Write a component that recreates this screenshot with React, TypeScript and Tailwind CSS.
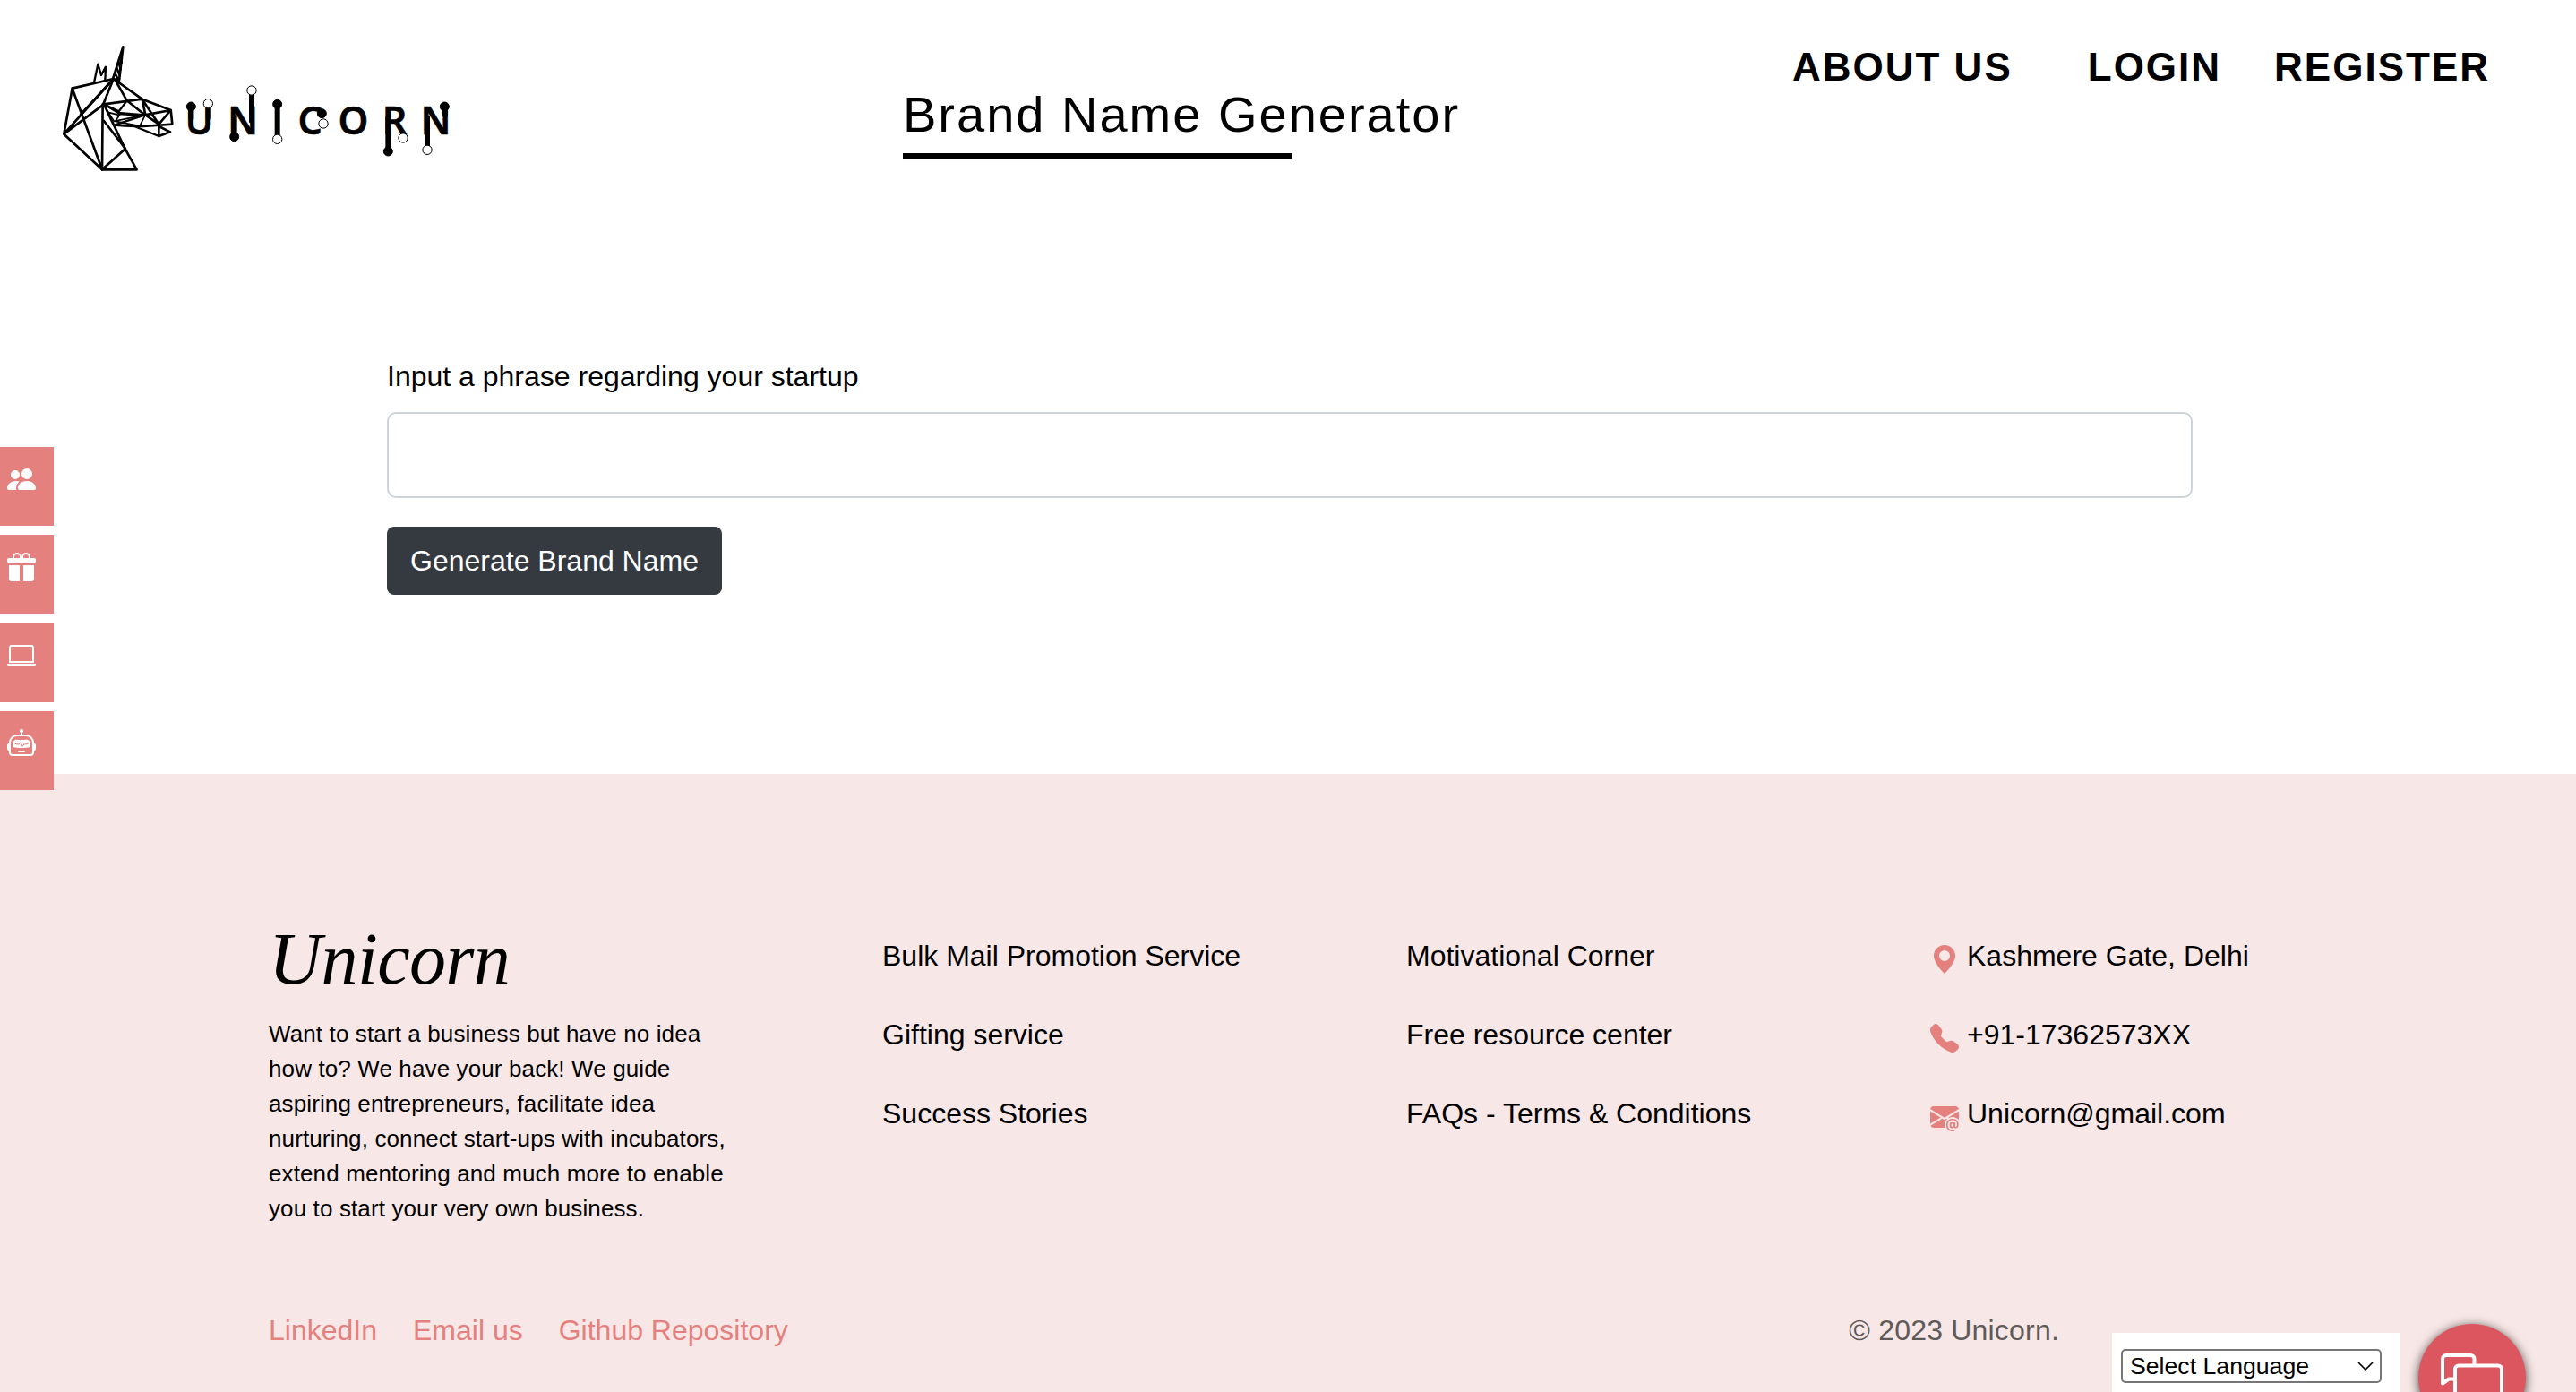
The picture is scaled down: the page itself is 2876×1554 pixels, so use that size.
import type { IconType } from "react-icons";
import {
  BsEnvelopeAtFill,
  BsGeoAltFill,
  BsGiftFill,
  BsLaptop,
  BsPeopleFill,
  BsRobot,
  BsTelephoneFill,
} from "react-icons/bs";

function UnicornHead() {
  return (
    <g fill="none" stroke="#000" strokeWidth="8" strokeLinejoin="round" strokeLinecap="round">
      {/* mane and neck */}
      <path d="M230 174L92 206L64 359L192 478H308L268 407L198 259L64 359L230 174" />
      <path d="M92 206L192 478L194 259" />
      <path d="M230 174L196 259M120 294L226 178M192 478L270 408L198 315" />
      {/* muzzle */}
      <path d="M198 259L326 242M230 174L326 242L422 279L427 326L330 333L235 329" />
      <path d="M236 178L275 247L335 295L422 279L382 326L326 242L337 295L382 326L382 366L420 352L388 336" />
      <path d="M235 329L300 333L382 366M275 247L248 283L198 259L246 288L335 295L235 328" strokeWidth="7" />
      <path d="M248 292L335 298L318 332M212 286L250 296L236 316L318 332M204 272L232 316L330 296" strokeWidth="5" />
      {/* horn */}
      <path d="M228 174L262 67L249 180Z" />
      <path d="M254 100L257 122M248 118L254 142M241 138L250 160M235 156L246 176" />
      {/* crown */}
      <path d="M165 187L178 125L189 162L204 134L202 180" strokeWidth="7" />
    </g>
  );
}

function Logo() {
  const letters: [string, number][] = [
    ["U", 518],
    ["N", 663],
    ["C", 889],
    ["O", 1033],
    ["R", 1172],
    ["N", 1310],
  ];
  return (
    <svg viewBox="0 0 1440 540" className="mt-[30px] ml-[50px] h-[180px] w-[480px] shrink-0" aria-label="Unicorn">
      <UnicornHead />
      <g
        className="font-['Noto_Sans','Open_Sans',sans-serif] font-semibold"
        fontSize="129"
        textAnchor="middle"
        stroke="#000"
        strokeWidth="1.5"
      >
        {letters.map(([char, x]) => (
          <text key={x} x={x} y="360">
            {char}
          </text>
        ))}
        <text x="779" y="358" fontSize="120" className="font-['Liberation_Sans',sans-serif] font-normal">
          I
        </text>
      </g>
      <g stroke="#000" strokeWidth="18">
        <path d="M490 268V310M548 268V310M635 300V366M693 215V320M779 260V374M1150 300V416M1281 300V410M1341 268V300" />
      </g>
      <g stroke="#000" strokeWidth="3" fill="#000">
        <circle cx="490" cy="267" r="15" />
        <circle cx="635" cy="368" r="15" />
        <circle cx="779" cy="259" r="15" />
        <circle cx="928" cy="290" r="15" />
        <circle cx="1150" cy="417" r="15" />
        <circle cx="1339" cy="267" r="15" />
      </g>
      <g stroke="#000" strokeWidth="3" fill="#fff">
        <circle cx="547" cy="257" r="15.5" />
        <circle cx="693" cy="213" r="15.5" />
        <circle cx="779" cy="376" r="15.5" />
        <circle cx="933" cy="324" r="15.5" />
        <circle cx="1200" cy="372" r="15.5" />
        <circle cx="1281" cy="412" r="15.5" />
      </g>
    </svg>
  );
}

function Header() {
  return (
    <header className="flex h-[210px] items-start">
      <Logo />
      <div className="mt-[96px] ml-[478px]">
        <h1 className="text-[56px] leading-[64px] tracking-[2px] whitespace-nowrap">Brand Name Generator</h1>
        <div className="mt-[11px] h-[6px] w-[435px] bg-black" />
      </div>
      <nav className="mt-[49px] mr-[96px] ml-auto flex text-[44px] leading-[52px] font-bold tracking-[2px] whitespace-nowrap">
        <a className="mr-[84px]">ABOUT US</a>
        <a className="mr-[59px]">LOGIN</a>
        <a>REGISTER</a>
      </nav>
    </header>
  );
}

function SideTabs() {
  const tabs: IconType[] = [BsPeopleFill, BsGiftFill, BsLaptop, BsRobot];
  return (
    <aside className="absolute top-[499px] left-0 flex h-[383px] flex-col justify-between">
      {tabs.map((Icon, i) => (
        <a key={i} className="h-[88px] w-[60px] bg-[#e4807d] pt-[20px] pl-[8px] text-white">
          <Icon className="size-8" />
        </a>
      ))}
    </aside>
  );
}

function GeneratorForm() {
  return (
    <main className="flex h-[654px] flex-col items-start px-[432px] pt-[186px] pr-[428px]">
      <label className="h-[64px] text-[32px] leading-[48px] whitespace-nowrap">
        Input a phrase regarding your startup
      </label>
      <input className="h-[96px] w-full rounded-[10px] border-2 border-[#ced4da] bg-white px-6 outline-none" />
      <button className="mt-[32px] h-[76px] w-[374px] rounded-lg bg-[#343a40] text-[32px] leading-[74px] whitespace-nowrap text-white">
        Generate Brand Name
      </button>
    </main>
  );
}

function LinkColumn({ links, className }: { links: string[]; className: string }) {
  return (
    <ul className={className}>
      {links.map((link) => (
        <li key={link} className="h-[88px] text-[32px] leading-[48px] whitespace-nowrap">
          {link}
        </li>
      ))}
    </ul>
  );
}

function Footer() {
  const contacts: [IconType, string][] = [
    [BsGeoAltFill, "Kashmere Gate, Delhi"],
    [BsTelephoneFill, "+91-17362573XX"],
    [BsEnvelopeAtFill, "Unicorn@gmail.com"],
  ];
  return (
    <footer className="flex h-[690px] flex-col bg-[#f7e7e6]">
      <div className="flex h-[578px] pl-[300px]">
        <div className="w-[685px] pt-[160px]">
          <h2 className="font-['Apple_Chancery','Liberation_Serif',cursive] text-[82px] leading-[94px] tracking-[-0.6px] italic">
            Unicorn
          </h2>
          <p className="mt-[17px] text-[26px] leading-[39px] tracking-[0.12px] whitespace-nowrap">
            Want to start a business but have no idea
            <br />
            how to? We have your back! We guide
            <br />
            aspiring entrepreneurs, facilitate idea
            <br />
            nurturing, connect start-ups with incubators,
            <br />
            extend mentoring and much more to enable
            <br />
            you to start your very own business.
          </p>
        </div>
        <LinkColumn
          className="w-[585px] pt-[179px]"
          links={["Bulk Mail Promotion Service", "Gifting service", "Success Stories"]}
        />
        <LinkColumn
          className="w-[585px] pt-[179px]"
          links={["Motivational Corner", "Free resource center", "FAQs - Terms & Conditions"]}
        />
        <ul className="pt-[179px]">
          {contacts.map(([Icon, label]) => (
            <li key={label} className="flex h-[88px] text-[32px] leading-[48px] whitespace-nowrap">
              <Icon className="mt-[12px] mr-[9px] size-8 text-[#e4807d]" />
              {label}
            </li>
          ))}
        </ul>
      </div>
      <div className="flex items-start text-[32px] leading-[48px] whitespace-nowrap">
        <div className="mt-[19px] ml-[300px] flex gap-[40px] text-[#e4807d]">
          <a>LinkedIn</a>
          <a>Email us</a>
          <a>Github Repository</a>
        </div>
        <span className="mt-[19px] mr-[59px] ml-auto tracking-[0.2px] text-[#5f5a5a]">© 2023 Unicorn.</span>
        <div className="mt-[46px] mr-[196px] h-[66px] w-[322px] bg-white pt-[18px] pl-[10px]">
          <div className="flex h-[38px] w-[291px] items-center justify-between rounded-[5px] border-2 border-[#767676] pr-[7px] pl-[8px] text-[26.67px] leading-[34px]">
            Select Language
            <svg viewBox="0 0 18 10" className="h-[10px] w-[18px]" fill="none" stroke="#000" strokeWidth="1.6">
              <path d="M1 1l8 8 8-8" />
            </svg>
          </div>
        </div>
      </div>
    </footer>
  );
}

function ChatButton() {
  return (
    <button className="absolute top-[1478px] left-[2700px] size-[120px] rounded-full bg-[#dc5660] shadow-[0_2px_12px_rgba(0,0,0,0.7)]">
      <svg viewBox="0 0 120 120" className="size-full" fill="none" stroke="#fff" strokeWidth="4" strokeLinejoin="round">
        <path d="M62.500 46V39a4 4 0 0 0-4-4H31a4 4 0 0 0-4 4v27.500l7-5h7" />
        <path d="M45 46.500h44a4 4 0 0 1 4 4V94l-8-8H45a4 4 0 0 1-4-4V50.500a4 4 0 0 1 4-4z" />
      </svg>
    </button>
  );
}

export default function App() {
  return (
    <div className="relative h-[1554px] w-[2876px] overflow-hidden bg-white font-['Liberation_Sans',Arial,sans-serif] text-black">
      <Header />
      <GeneratorForm />
      <Footer />
      <SideTabs />
      <ChatButton />
    </div>
  );
}
